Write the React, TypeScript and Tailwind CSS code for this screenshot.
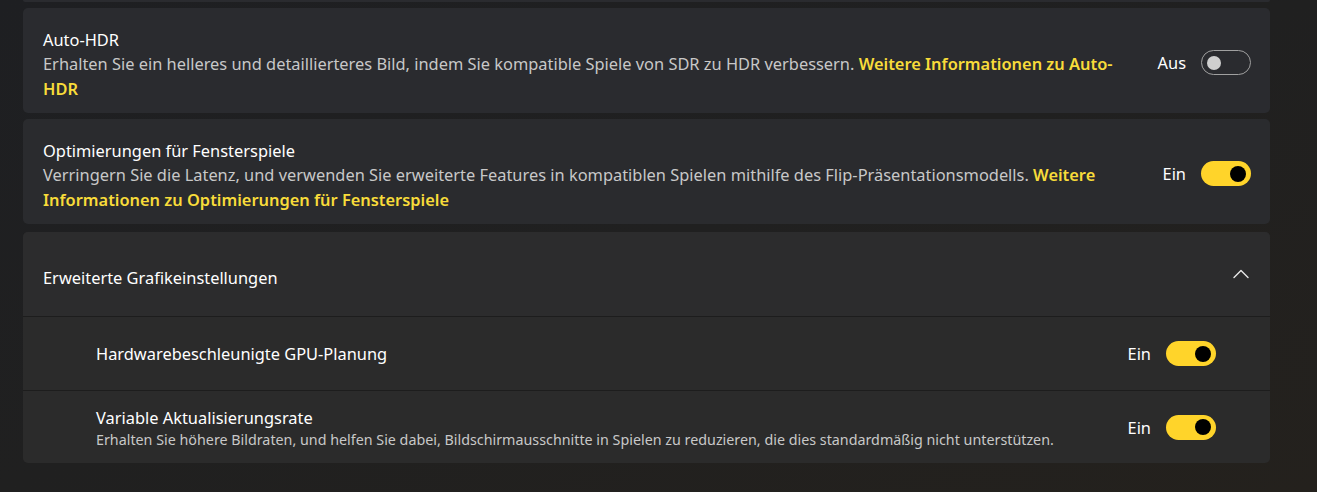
import { ChevronUp } from 'lucide-react';

type ToggleProps = { on: boolean };

function Toggle({ on }: ToggleProps) {
    if (on) {
        return (
            <div className="w-[50px] h-[25px] rounded-full bg-[#ffd42a] flex items-center justify-end pr-[5px] shrink-0">
                <div className="w-[16px] h-[16px] rounded-full bg-black" />
            </div>
        );
    }
    return (
        <div className="w-[50px] h-[25px] rounded-full border-[1.5px] border-[#a0a0a0] flex items-center pl-[5px] shrink-0">
            <div className="w-[14px] h-[14px] rounded-full bg-[#cfcfcf]" />
        </div>
    );
}

function ToggleWithLabel({ on }: ToggleProps) {
    return (
        <div className="flex items-center gap-[15px] shrink-0">
            <span className="text-white">{on ? 'Ein' : 'Aus'}</span>
            <Toggle on={on} />
        </div>
    );
}

export default function App() {
    return (
        <div
            className="min-h-screen w-full bg-gradient-to-br from-[#1e1f22] via-[#202020] to-[#24211d] text-[16.4px] leading-[25px] text-white overflow-hidden"
            style={{ fontFamily: '"Segoe UI", "Noto Sans", sans-serif' }}
        >
            <div className="w-[1247px] ml-[23px] flex flex-col">
                {/* cut-off card above */}
                <div className="h-[2px] rounded-b-[5px] bg-[#2a2b2f]" />

                {/* Auto-HDR */}
                <div className="mt-[6px] h-[105px] rounded-[5px] bg-[#2a2b2f] flex items-center pt-[4px] pl-[20px] pr-[19px]">
                    <div className="flex-1 pr-[20px] pt-[4px]">
                        <div className="leading-[22px]">Auto-HDR</div>
                        <div className="text-[#c8c8c8]">
                            Erhalten Sie ein helleres und detaillierteres Bild, indem Sie kompatible Spiele von SDR zu HDR verbessern.{' '}
                            <span className="text-[#f8dc3a] font-semibold">Weitere Informationen zu Auto-HDR</span>
                        </div>
                    </div>
                    <ToggleWithLabel on={false} />
                </div>

                {/* Fensterspiele */}
                <div className="mt-[6px] h-[105px] rounded-[5px] bg-[#2a2b2e] flex items-center pt-[4px] pl-[20px] pr-[19px]">
                    <div className="flex-1 pr-[20px] pt-[4px]">
                        <div className="leading-[22px]">Optimierungen für Fensterspiele</div>
                        <div className="text-[#c8c8c8]">
                            Verringern Sie die Latenz, und verwenden Sie erweiterte Features in kompatiblen Spielen mithilfe des Flip-Präsentationsmodells.{' '}
                            <span className="text-[#f8dc3a] font-semibold">Weitere Informationen zu Optimierungen für Fensterspiele</span>
                        </div>
                    </div>
                    <ToggleWithLabel on={true} />
                </div>

                {/* Erweiterte Grafikeinstellungen */}
                <div className="mt-[8px] rounded-[5px] bg-[#2b2b2b] flex flex-col overflow-hidden">
                    <div className="h-[84px] bg-[#2c2c2d] flex items-center justify-between pl-[20px] pr-[15px]">
                        <span className="pt-[6px]">Erweiterte Grafikeinstellungen</span>
                        <ChevronUp className="w-[28px] h-[28px] text-[#e8e8e8]" strokeWidth={1.2} />
                    </div>
                    <div className="h-[74px] border-t border-[#1d1d1d] flex items-center pl-[73px] pr-[54px]">
                        <span className="flex-1">Hardwarebeschleunigte GPU-Planung</span>
                        <ToggleWithLabel on={true} />
                    </div>
                    <div className="h-[73px] border-t border-[#1d1d1d] flex items-center pl-[73px] pr-[54px]">
                        <div className="flex-1">
                            <div>Variable Aktualisierungsrate</div>
                            <div className="text-[14.3px] leading-[20px] text-[#c8c8c8]">
                                Erhalten Sie höhere Bildraten, und helfen Sie dabei, Bildschirmausschnitte in Spielen zu reduzieren, die dies standardmäßig nicht unterstützen.
                            </div>
                        </div>
                        <ToggleWithLabel on={true} />
                    </div>
                </div>
            </div>
        </div>
    );
}
